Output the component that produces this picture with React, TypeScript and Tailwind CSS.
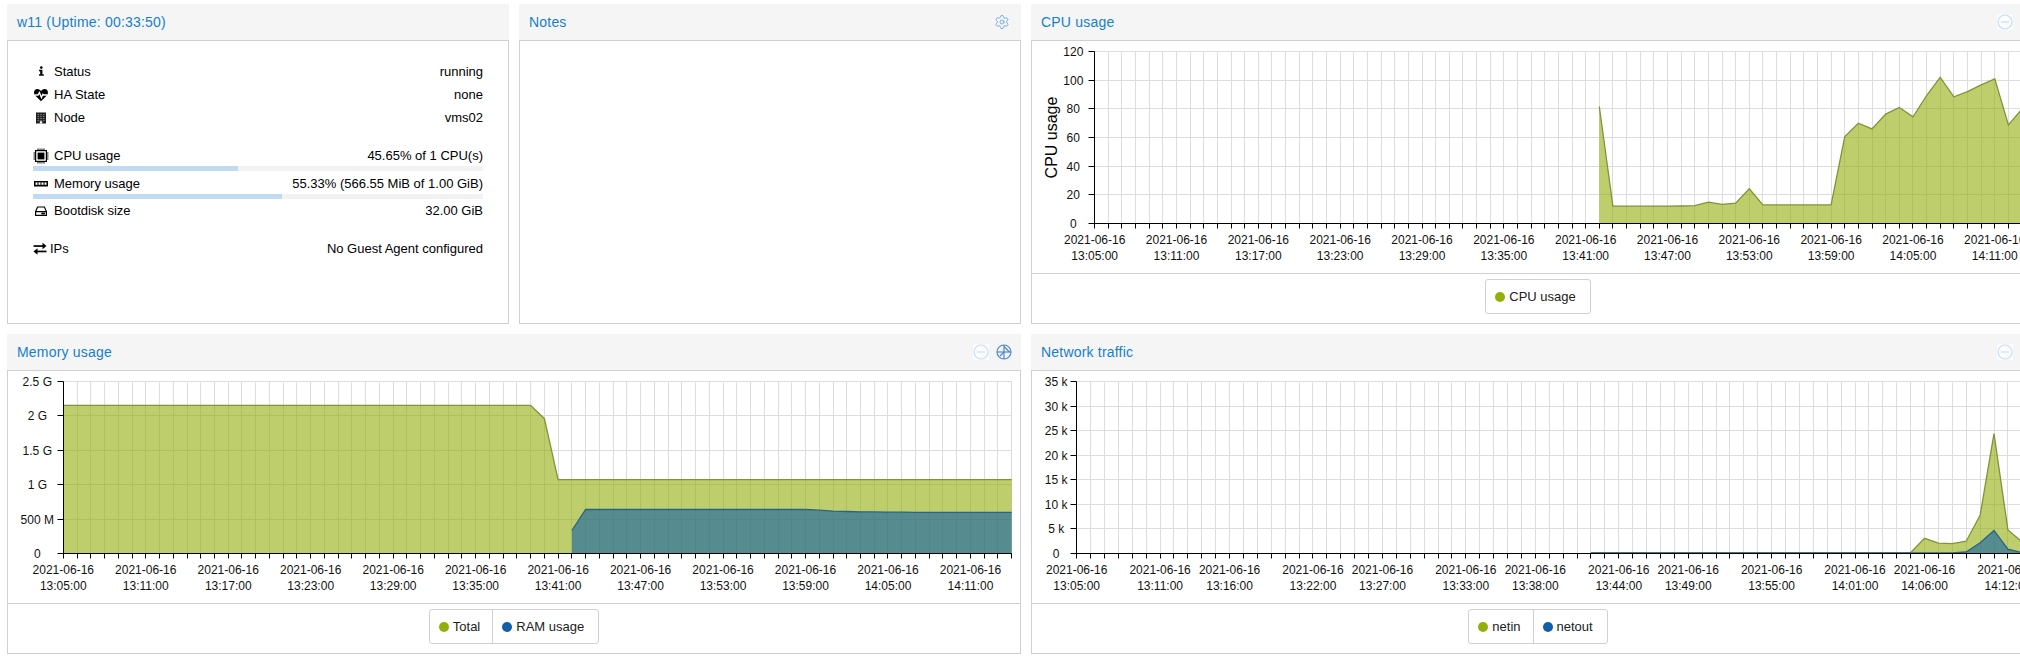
import type { ReactNode } from "react";
import clsx from "clsx";
import { Settings } from "lucide-react";

type Series = { values: (number | null)[]; fill: string; stroke: string };

// chart geometry, shared by all three graphs (px inside the panel body)
const W = 1012;
const H = 232;
const TOP = 10.5;
const BOTTOM = 182.5;
const RIGHT = 1003.7;
const SPAN = 69;

const crisp = (v: number) => Math.floor(v) + 0.5;

function timeLabel(i: number) {
  const m = 5 + i;
  const h = 13 + Math.floor(m / 60);
  return `${h}:${String(m % 60).padStart(2, "0")}:00`;
}

function runs(values: (number | null)[]) {
  const out: [number, number][] = [];
  let start = -1;
  values.forEach((v, i) => {
    if (v !== null && start < 0) start = i;
    if ((v === null || i === values.length - 1) && start >= 0) {
      out.push([start, v === null ? i - 1 : i]);
      start = -1;
    }
  });
  return out;
}

function Chart({
  axisX,
  max,
  ticks,
  labelX,
  xLabels,
  series,
  yTitle,
}: {
  axisX: number;
  max: number;
  ticks: [number, string][];
  labelX: number;
  xLabels: number[];
  series: Series[];
  yTitle?: string;
}) {
  const step = (RIGHT - axisX) / SPAN;
  const px = (i: number) => axisX + i * step;
  const py = (v: number) => BOTTOM - (v / max) * (BOTTOM - TOP);
  const ax = crisp(axisX);

  return (
    <svg width={W} height={H} className="block" fontFamily="Liberation Sans, Arial, sans-serif">
      {/* grid */}
      {Array.from({ length: SPAN + 1 }).map((_, i) => (
        <line key={`v${i}`} x1={crisp(px(i))} x2={crisp(px(i))} y1={TOP} y2={BOTTOM} stroke="#dddddd" />
      ))}
      {ticks.map(([v]) => (
        <line key={`h${v}`} x1={ax} x2={RIGHT} y1={crisp(py(v))} y2={crisp(py(v))} stroke="#dddddd" />
      ))}

      {/* series */}
      {series.map((s, si) =>
        runs(s.values).map(([a, b]) => {
          const pts = [];
          for (let i = a; i <= b; i++) pts.push(`${px(i).toFixed(1)},${py(s.values[i] as number).toFixed(1)}`);
          return (
            <g key={`${si}-${a}`}>
              <path
                d={`M${px(a).toFixed(1)},${BOTTOM} L${pts.join(" L")} L${px(b).toFixed(1)},${BOTTOM} Z`}
                fill={s.fill}
                fillOpacity={0.6}
              />
              <path d={`M${pts.join(" L")}`} fill="none" stroke={s.stroke} strokeWidth={1.3} />
            </g>
          );
        }),
      )}

      {/* axes */}
      <line x1={ax} x2={ax} y1={TOP} y2={BOTTOM} stroke="#000" />
      <line x1={ax} x2={RIGHT} y1={BOTTOM} y2={BOTTOM} stroke="#000" />
      {ticks.map(([v, label]) => (
        <g key={`t${v}`}>
          <line x1={ax - 6} x2={ax} y1={crisp(py(v))} y2={crisp(py(v))} stroke="#000" />
          <text x={labelX} y={py(v) + 4.5} fontSize={12} textAnchor="middle" fill="#111">
            {label}
          </text>
        </g>
      ))}
      {Array.from({ length: SPAN + 1 }).map((_, i) => (
        <line key={`x${i}`} x1={crisp(px(i))} x2={crisp(px(i))} y1={BOTTOM} y2={BOTTOM + 5} stroke="#000" />
      ))}
      {xLabels.map((i) => (
        <text key={`l${i}`} x={px(i)} fontSize={12} textAnchor="middle" fill="#111">
          <tspan x={px(i)} y={203}>
            2021-06-16
          </tspan>
          <tspan x={px(i)} y={219}>
            {timeLabel(i)}
          </tspan>
        </text>
      ))}

      {yTitle && (
        <text
          x={0}
          y={0}
          fontSize={16}
          textAnchor="middle"
          fill="#000"
          transform={`translate(${axisX - 43},${(TOP + BOTTOM) / 2}) rotate(-90)`}
          dy={5.5}
        >
          {yTitle}
        </text>
      )}
    </svg>
  );
}

function Legend({ items }: { items: { label: string; color: string }[] }) {
  return (
    <div className="flex flex-1 justify-center border-t border-[#d0d0d0] pt-[5px]">
      <div className="flex h-[35px] rounded-[3px] border border-[#d0d0d0] pr-[2px]">
        {items.map((it, i) => (
          <div
            key={it.label}
            className={clsx(
              "flex items-center gap-[4px] pl-[9px] pr-[12px] text-[13px] text-[#222]",
              i > 0 && "border-l border-[#d0d0d0]",
            )}
          >
            <span className="h-[10px] w-[10px] rounded-full" style={{ background: it.color }} />
            {it.label}
          </div>
        ))}
      </div>
    </div>
  );
}

function MinusTool() {
  return (
    <svg width="16" height="16" viewBox="0 0 16 16">
      <rect x="0" y="0" width="16" height="16" fill="#fafcfe" />
      <circle cx="8" cy="8" r="7" fill="none" stroke="#c9dcf0" strokeWidth="1.2" />
      <line x1="4" x2="12" y1="8" y2="8" stroke="#c9dcf0" strokeWidth="1.2" />
    </svg>
  );
}

function ResetTool() {
  return (
    <svg width="16" height="16" viewBox="0 0 16 16" fill="none" stroke="#4a89d2" strokeWidth="1.2">
      <circle cx="8" cy="8" r="7" />
      <line x1="8" x2="8" y1="1" y2="15" />
      <line x1="1" x2="15" y1="8" y2="8" />
      <path d="M8 2.5 L13.5 8 M8 8 L4 12" />
    </svg>
  );
}

function Panel({
  title,
  tools,
  children,
  className,
}: {
  title: string;
  tools?: ReactNode;
  children?: ReactNode;
  className?: string;
}) {
  return (
    <div className={clsx("flex flex-col", className)}>
      <div className="flex h-[36px] shrink-0 items-center justify-between bg-[#f5f5f5] pl-[10px] pr-[9px]">
        <span className="text-[14px] tracking-[0.2px] text-[#157fcc]">{title}</span>
        <div className="flex items-center gap-[7px]">{tools}</div>
      </div>
      <div className="flex min-h-0 flex-1 flex-col border border-[#d0d0d0] bg-white">{children}</div>
    </div>
  );
}

/* ---------- status icons ---------- */

const InfoIcon = () => (
  <svg width="16" height="16" viewBox="0 0 16 16" fill="#000">
    <circle cx="8.3" cy="3.6" r="1.3" />
    <path d="M6 5.8 H9.4 V10.2 H10.8 V11.7 H6 V10.2 H7.2 V7.3 H6 Z" />
  </svg>
);

const HeartIcon = () => (
  <svg width="16" height="16" viewBox="0 0 16 16">
    <path
      d="M8 14.2 L2.2 8.6 C0.3 6.6 0.6 2.4 4.2 2.1 C6 2 7.3 3.1 8 4.2 C8.7 3.1 10 2 11.8 2.1 C15.4 2.4 15.7 6.6 13.8 8.6 Z"
      fill="#000"
    />
    <polyline points="1.5,8 5,8 6.4,5.6 8.4,10.6 9.9,7.2 11,8 14.5,8" fill="none" stroke="#fff" strokeWidth="1.3" />
  </svg>
);

const NodeIcon = () => (
  <svg width="16" height="16" viewBox="0 0 16 16">
    <rect x="3" y="2.5" width="10" height="11" fill="#1c1c1c" />
    {[4, 6, 8, 10].map((y) =>
      [4.5, 7.2, 9.9].map((x) => <rect key={`${x}-${y}`} x={x} y={y} width="1.6" height="1.2" fill="#7a7a7a" />),
    )}
    <rect x="6.8" y="11.3" width="2.4" height="2.2" fill="#fff" />
  </svg>
);

const CpuIcon = () => (
  <svg width="16" height="16" viewBox="0 0 16 16">
    <rect x="2.6" y="2.6" width="10.8" height="10.8" fill="#fff" stroke="#000" strokeWidth="1.2" />
    <rect x="4.6" y="4.6" width="6.8" height="6.8" fill="#000" />
    <path
      d="M5 0.5v2 M7 0.5v2 M9 0.5v2 M11 0.5v2 M5 13.5v2 M7 13.5v2 M9 13.5v2 M11 13.5v2 M0.5 5h2 M0.5 7h2 M0.5 9h2 M0.5 11h2 M13.5 5h2 M13.5 7h2 M13.5 9h2 M13.5 11h2"
      stroke="#000"
      strokeWidth="1"
    />
  </svg>
);

const MemoryIcon = () => (
  <svg width="16" height="16" viewBox="0 0 16 16">
    <rect x="1" y="5" width="14" height="5.5" fill="#000" />
    {[2.5, 5.5, 8.5, 11.5].map((x) => (
      <rect key={x} x={x} y="6.4" width="2" height="2.4" fill="#fff" />
    ))}
  </svg>
);

const DiskIcon = () => (
  <svg width="16" height="16" viewBox="0 0 16 16" fill="none" stroke="#000" strokeWidth="1.2">
    <path d="M2.6 8.6 L4.6 4 H11.4 L13.4 8.6 V12.4 H2.6 Z M2.6 8.6 H13.4" />
    <circle cx="11" cy="10.5" r="0.5" fill="#000" />
    <circle cx="9.3" cy="10.5" r="0.5" fill="#000" />
  </svg>
);

const ExchangeIcon = () => (
  <svg width="14" height="16" viewBox="0 0 14 16" fill="#000">
    <rect x="0.5" y="4.2" width="10" height="1.7" />
    <polygon points="13.5,5 9.5,1.8 9.5,8.2" />
    <rect x="3.5" y="9.6" width="10" height="1.7" />
    <polygon points="0.5,10.45 4.5,7.25 4.5,13.65" />
  </svg>
);

function Row({ icon, label, value, tall }: { icon: ReactNode; label: string; value: string; tall?: boolean }) {
  return (
    <div className={clsx("flex items-center justify-between", tall ? "h-[23px]" : "h-[20px]")}>
      <div className="flex items-center gap-[5px]">
        <span className="flex w-[16px] justify-center">{icon}</span>
        {label}
      </div>
      <span>{value}</span>
    </div>
  );
}

function Bar({ pct }: { pct: number }) {
  return (
    <div className="h-[5px] bg-[#f2f2f2]">
      <div className="h-full bg-[#bfdaf1]" style={{ width: `${pct}%` }} />
    </div>
  );
}

/* ---------- data ---------- */

const nulls = (n: number) => Array.from({ length: n }, () => null as number | null);
const fill = (n: number, v: number) => Array.from({ length: n }, () => v as number | null);

const cpu: (number | null)[] = [
  ...nulls(37),
  81.6,
  12.1, 12.1, 12.1, 12.1, 12.1, 12.2, 12.4,
  14.9, 13.3, 14.2, 24.2,
  13, 13, 13, 13, 13, 13,
  60.7, 70, 66, 76.3, 81, 74.4, 89.3, 102, 88.4, 92, 96.7, 100.9, 68.8, 80, 76,
];

const memTotal: (number | null)[] = [...fill(35, 2.154), 1.96, ...fill(34, 1.073)];
const memUsed: (number | null)[] = [
  ...nulls(37),
  0.335,
  ...fill(17, 0.64),
  0.63, 0.616, 0.611, 0.606, 0.604, 0.602, 0.6,
  ...fill(8, 0.598),
];

const netIn: (number | null)[] = [...nulls(37), ...fill(24, 0.15), 3.1, 2.1, 2.0, 2.5, 7.75, 24.4, 4.8, 2.4, 1.6];
const netOut: (number | null)[] = [...nulls(37), ...fill(27, 0.1), 0.3, 2.2, 4.7, 0.9, 0.2, 0.2];

const GREEN = { fill: "#94ae0a", stroke: "#7f9439" };
const BLUE = { fill: "#115fa6", stroke: "#2b6482" };

const sixMin = [0, 6, 12, 18, 24, 30, 36, 42, 48, 54, 60, 66];

export default function App() {
  const tools = (
    <>
      <MinusTool />
      <ResetTool />
    </>
  );

  return (
    <div className="h-[660px] w-[2020px] overflow-hidden bg-white font-['Liberation_Sans',Arial,sans-serif]">
      <div className="grid w-[2060px] grid-cols-[repeat(4,502px)] grid-rows-[320px_320px] gap-[10px] pl-[7px] pt-[4px]">
        {/* status */}
        <Panel title="w11 (Uptime: 00:33:50)">
          <div className="px-[25px] pt-[19px] text-[13px] text-black">
            <Row tall icon={<InfoIcon />} label="Status" value="running" />
            <Row tall icon={<HeartIcon />} label="HA State" value="none" />
            <Row tall icon={<NodeIcon />} label="Node" value="vms02" />
            <div className="mt-[17px]">
              <Row icon={<CpuIcon />} label="CPU usage" value="45.65% of 1 CPU(s)" />
              <Bar pct={45.65} />
            </div>
            <div className="mt-[3px]">
              <Row icon={<MemoryIcon />} label="Memory usage" value="55.33% (566.55 MiB of 1.00 GiB)" />
              <Bar pct={55.33} />
            </div>
            <div className="mt-[2px]">
              <Row icon={<DiskIcon />} label="Bootdisk size" value="32.00 GiB" />
            </div>
            <div className="mt-[18px] flex h-[20px] items-center justify-between">
              <div className="flex items-center gap-[3px]">
                <ExchangeIcon />
                IPs
              </div>
              <span>No Guest Agent configured</span>
            </div>
          </div>
        </Panel>

        {/* notes */}
        <Panel
          title="Notes"
          tools={<Settings size={16} strokeWidth={1.5} className="mr-[2px] text-[#7aaee3]" />}
        />

        {/* cpu */}
        <Panel title="CPU usage" tools={tools} className="col-span-2">
          <Chart
            axisX={62.7}
            max={120}
            ticks={[0, 20, 40, 60, 80, 100, 120].map((v) => [v, String(v)])}
            labelX={41.3}
            xLabels={sixMin}
            series={[{ values: cpu, ...GREEN }]}
            yTitle="CPU usage"
          />
          <Legend items={[{ label: "CPU usage", color: "#94ae0a" }]} />
        </Panel>

        {/* memory */}
        <Panel title="Memory usage" tools={tools} className="col-span-2">
          <Chart
            axisX={55.3}
            max={2.5}
            ticks={[
              [0, "0"],
              [0.5, "500 M"],
              [1, "1 G"],
              [1.5, "1.5 G"],
              [2, "2 G"],
              [2.5, "2.5 G"],
            ]}
            labelX={29.3}
            xLabels={sixMin}
            series={[
              { values: memTotal, ...GREEN },
              { values: memUsed, ...BLUE },
            ]}
          />
          <Legend
            items={[
              { label: "Total", color: "#94ae0a" },
              { label: "RAM usage", color: "#115fa6" },
            ]}
          />
        </Panel>

        {/* network */}
        <Panel title="Network traffic" tools={tools} className="col-span-2">
          <Chart
            axisX={44.7}
            max={35}
            ticks={[0, 5, 10, 15, 20, 25, 30, 35].map((v) => [v, v === 0 ? "0" : `${v} k`])}
            labelX={24.2}
            xLabels={[0, 6, 11, 17, 22, 28, 33, 39, 44, 50, 56, 61, 67]}
            series={[
              { values: netIn, ...GREEN },
              { values: netOut, ...BLUE },
            ]}
          />
          <Legend
            items={[
              { label: "netin", color: "#94ae0a" },
              { label: "netout", color: "#115fa6" },
            ]}
          />
        </Panel>
      </div>
    </div>
  );
}
